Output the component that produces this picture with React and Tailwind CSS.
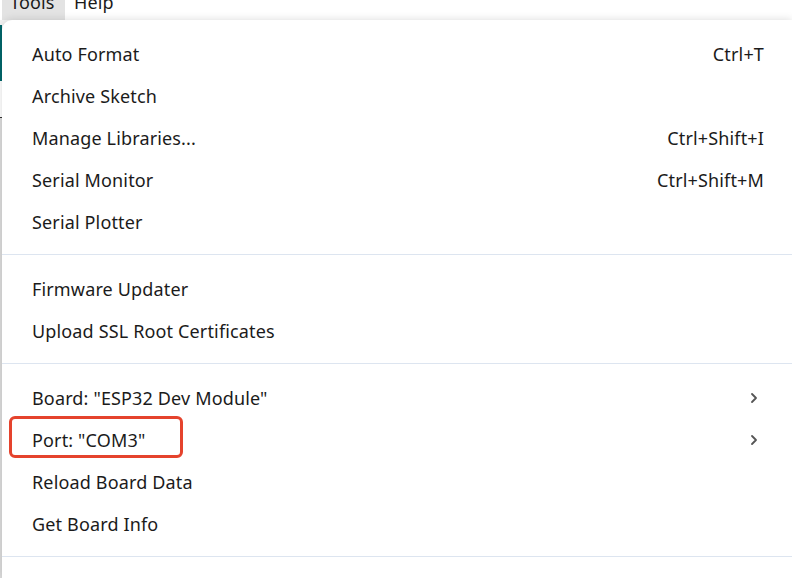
import { ChevronRight } from "lucide-react";

const groups = [
  [
    { label: "Auto Format", shortcut: "Ctrl+T" },
    { label: "Archive Sketch" },
    { label: "Manage Libraries...", shortcut: "Ctrl+Shift+I" },
    { label: "Serial Monitor", shortcut: "Ctrl+Shift+M" },
    { label: "Serial Plotter" },
  ],
  [{ label: "Firmware Updater" }, { label: "Upload SSL Root Certificates" }],
  [
    { label: 'Board: "ESP32 Dev Module"', sub: true },
    { label: 'Port: "COM3"', sub: true, marked: true },
    { label: "Reload Board Data" },
    { label: "Get Board Info" },
  ],
];

const MenuItem = ({ item }) => (
  <div className="relative flex h-[42px] items-center pl-[30px] pr-[28px]">
    <span className="flex-1">{item.label}</span>
    {item.shortcut && <span>{item.shortcut}</span>}
    {item.sub && (
      <ChevronRight className="mr-[2px] h-[16px] w-[16px] text-[#555]" strokeWidth={2.75} />
    )}
    {item.marked && (
      <div className="pointer-events-none absolute left-[7px] top-[-3px] h-[42px] w-[174px] rounded-[6px] border-[3px] border-[#e5432d]" />
    )}
  </div>
);

export default function App() {
  return (
    <div
      className="flex h-[578px] w-[792px] flex-col overflow-hidden bg-white text-[18px] tracking-[0.15px] text-[#1b1b1b]"
      style={{ fontFamily: '"Noto Sans", "Liberation Sans", sans-serif' }}
    >
      {/* menubar, cut off at the top */}
      <div className="flex h-[20px] items-end overflow-hidden bg-white leading-[20px]">
        <div className="ml-[2px] h-[20px] w-[63px] bg-[#e3e3e3] pl-[8px]">
          <span className="relative top-[-8px]">Tools</span>
        </div>
        <div className="h-[20px] pl-[9px]">
          <span className="relative top-[-8px]">Help</span>
        </div>
      </div>

      <div className="flex flex-1 bg-[#f3f3f3]">
        {/* editor edge peeking out on the left */}
        <div className="flex w-[2px] flex-col">
          <div className="mt-[5px] h-[56px] bg-[#00676b]" />
          <div className="h-[36px] bg-white" />
          <div className="h-[1px] bg-[#333]" />
          <div className="flex-1 bg-[#dcdcdc]" />
        </div>

        <div className="relative flex-1 rounded-tl-[10px] bg-white shadow-[0_0_8px_rgba(0,0,0,0.15)]">
          {groups.map((g, i) => (
            <div key={i}>
              <div className="pb-[11px] pt-[13px]">
                {g.map((item) => (
                  <MenuItem key={item.label} item={item} />
                ))}
              </div>
              <div className="h-[1px] bg-[#dde5f0]" />
            </div>
          ))}
        </div>
      </div>
    </div>
  );
}
